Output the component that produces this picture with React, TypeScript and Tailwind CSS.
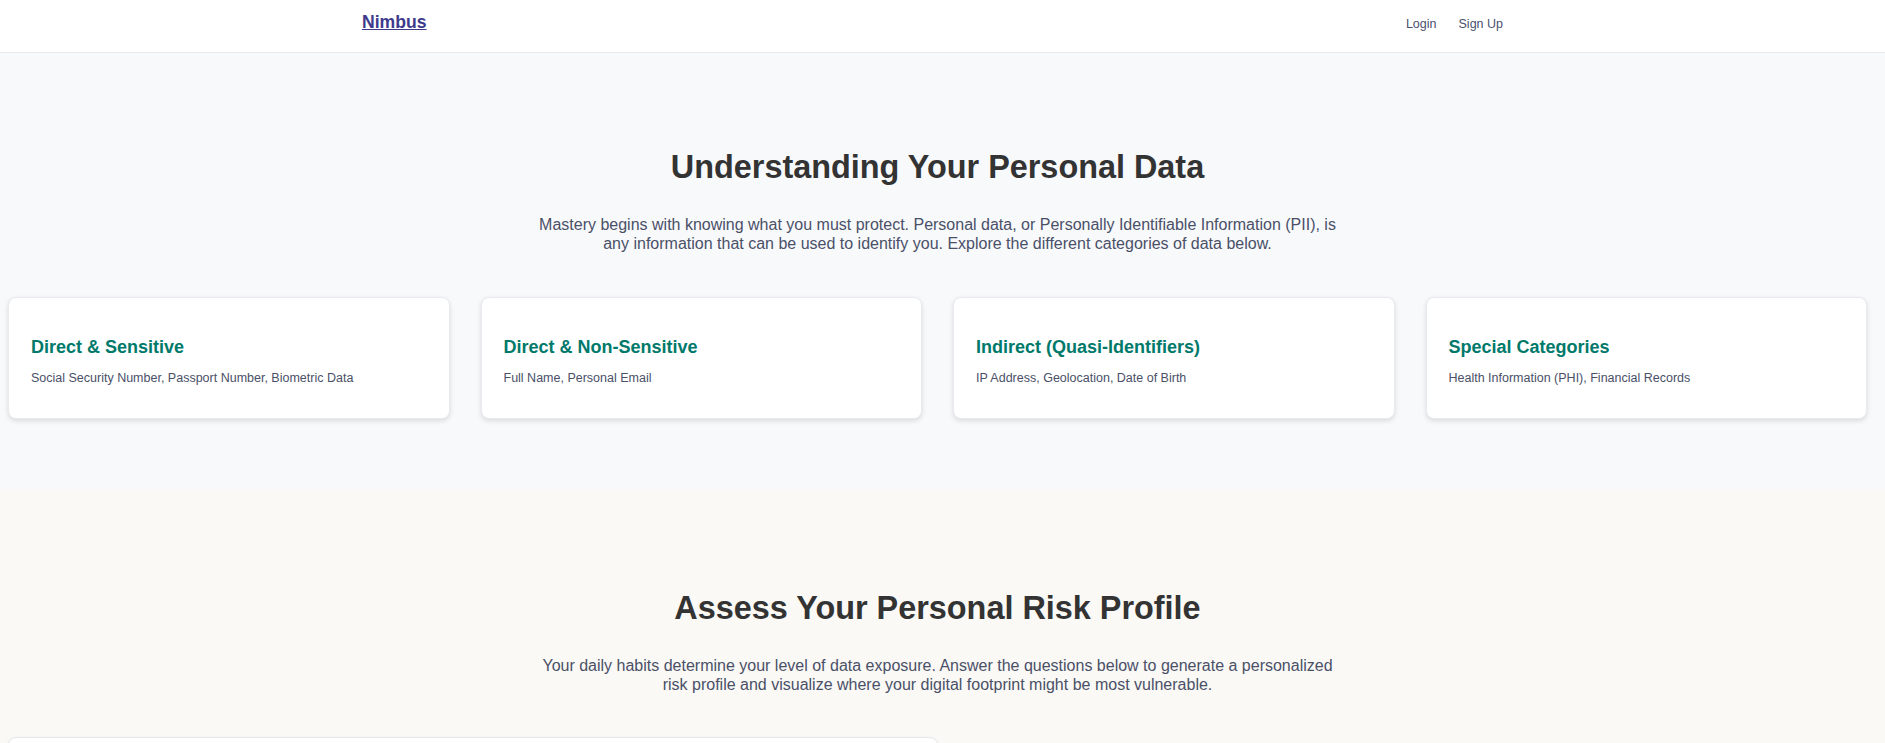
const categories = [
  { title: 'Direct & Sensitive', text: 'Social Security Number, Passport Number, Biometric Data' },
  { title: 'Direct & Non-Sensitive', text: 'Full Name, Personal Email' },
  { title: 'Indirect (Quasi-Identifiers)', text: 'IP Address, Geolocation, Date of Birth' },
  { title: 'Special Categories', text: 'Health Information (PHI), Financial Records' },
];

const Header = () => (
  <header className="h-[53px] border-b border-[#e6e8ee] bg-white shadow-[0_1px_3px_rgba(0,0,0,0.04)]">
    <div className="h-full pr-[20px] pt-[12px]">
      <nav className="mx-auto flex max-w-[1141px] items-baseline justify-between">
        <a href="#" className="text-[17.6px] font-bold leading-[1.15] text-[#3d3a8c] underline">
          Nimbus
        </a>
        <div className="flex items-baseline gap-[22px] text-[12.5px] leading-[1.15] text-[#4a5170]">
          <a href="#">Login</a>
          <a href="#">Sign Up</a>
        </div>
      </nav>
    </div>
  </header>
);

const SectionIntro = ({ title, children }: { title: string; children: React.ReactNode }) => (
  <div className="flex flex-col items-center text-center">
    <h2 className="text-[32.4px] font-bold leading-[1.15] text-[#333333]">{title}</h2>
    <p className="mt-[30px] max-w-[808px] text-[16px] leading-[1.15] text-[#4a5068]">{children}</p>
  </div>
);

export default function App() {
  return (
    <div className="min-h-screen bg-[#faf9f5] font-['Liberation_Sans',Arial,sans-serif]">
      <Header />

      {/* Personal data categories */}
      <section className="bg-[#f8f9fb] pb-[70px] pl-2 pr-[18px] pt-[96px]">
        <SectionIntro title="Understanding Your Personal Data">
          Mastery begins with knowing what you must protect. Personal data, or Personally Identifiable
          Information (PII), is any information that can be used to identify you. Explore the different
          categories of data below.
        </SectionIntro>

        <div className="mt-[44px] grid grid-cols-4 gap-[31px]">
          {categories.map((c) => (
            <div
              key={c.title}
              className="h-[122px] rounded-lg border border-[#e8eaee] bg-white px-[22px] pt-[39px] shadow-[0_2px_5px_rgba(0,0,0,0.12)]"
            >
              <h3 className="text-[18px] font-bold leading-[1.15] text-[#00796b]">{c.title}</h3>
              <p className="mt-[13px] text-[12.5px] leading-[1.15] text-[#4a5068]">{c.text}</p>
            </div>
          ))}
        </div>
      </section>

      {/* Risk assessment */}
      <section className="bg-[#faf9f5] pb-10 pl-2 pr-[18px] pt-[101px]">
        <SectionIntro title="Assess Your Personal Risk Profile">
          Your daily habits determine your level of data exposure. Answer the questions below to generate a
          personalized risk profile and visualize where your digital footprint might be most vulnerable.
        </SectionIntro>

        <div className="mt-[43px] flex">
          <div className="h-[300px] w-[930px] rounded-lg border border-[#e6e8ee] bg-white shadow-[0_2px_5px_rgba(0,0,0,0.06)]" />
        </div>
      </section>
    </div>
  );
}
